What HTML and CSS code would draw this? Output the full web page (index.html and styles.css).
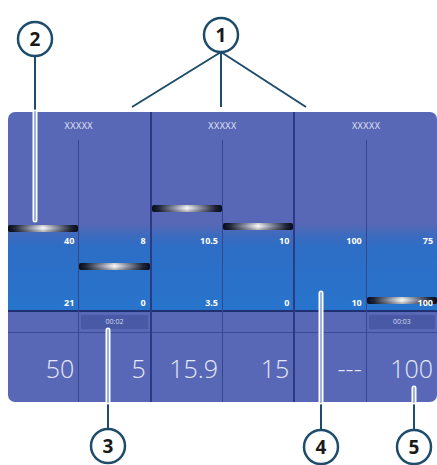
FILE: index.html
```html
<!DOCTYPE html>
<html lang="en">

<head>
    <meta charset="UTF-8">
    <meta name="viewport" content="width=device-width, initial-scale=1.0">
    <title>Level display</title>
    <link rel="stylesheet" href="styles.css">
</head>

<body>
    <div class="screen">
        <div class="panel">
            <div class="group">
                <div class="group-title">XXXXX</div>
                <div class="cols">
                    <div class="col">
                        <div class="bar">
                            <div class="handle" style="top: 85px"></div>
                            <span>40</span>
                            <span>21</span>
                        </div>
                        <div class="timer"></div>
                        <div class="value">50</div>
                    </div>
                    <div class="col">
                        <div class="bar">
                            <div class="handle" style="top: 123px"></div>
                            <span>8</span>
                            <span>0</span>
                        </div>
                        <div class="timer"><div class="timer-box">00:02</div></div>
                        <div class="value">5</div>
                    </div>
                </div>
            </div>
            <div class="group">
                <div class="group-title">XXXXX</div>
                <div class="cols">
                    <div class="col">
                        <div class="bar">
                            <div class="handle" style="top: 65px"></div>
                            <span>10.5</span>
                            <span>3.5</span>
                        </div>
                        <div class="timer"></div>
                        <div class="value">15.9</div>
                    </div>
                    <div class="col">
                        <div class="bar">
                            <div class="handle" style="top: 83px"></div>
                            <span>10</span>
                            <span>0</span>
                        </div>
                        <div class="timer"></div>
                        <div class="value">15</div>
                    </div>
                </div>
            </div>
            <div class="group">
                <div class="group-title">XXXXX</div>
                <div class="cols">
                    <div class="col">
                        <div class="bar">
                            <span>100</span>
                            <span>10</span>
                        </div>
                        <div class="timer"></div>
                        <div class="value">---</div>
                    </div>
                    <div class="col">
                        <div class="bar">
                            <div class="handle" style="top: 157px"></div>
                            <span>75</span>
                            <span>100</span>
                        </div>
                        <div class="timer"><div class="timer-box">00:03</div></div>
                        <div class="value">100</div>
                    </div>
                </div>
            </div>
        </div>

        <!-- callouts -->
        <svg class="callouts" width="437" height="465" viewBox="0 0 437 465">
            <g class="line">
                <line x1="221" y1="52" x2="221" y2="107" />
                <line x1="221" y1="52" x2="132" y2="107" />
                <line x1="221" y1="52" x2="306" y2="107" />
                <line x1="35" y1="56" x2="35" y2="112" />
                <line x1="108" y1="429" x2="108" y2="402" />
                <line x1="321" y1="430" x2="321" y2="402" />
                <line x1="414" y1="430" x2="414" y2="402" />
            </g>
            <g class="tube-out">
                <line x1="35" y1="112" x2="35" y2="220" />
                <line x1="108" y1="402" x2="108" y2="330" />
                <line x1="321" y1="402" x2="321" y2="293" />
                <line x1="414" y1="402" x2="414" y2="388" />
            </g>
            <g class="tube-in">
                <line x1="35" y1="112" x2="35" y2="220" />
                <line x1="108" y1="402" x2="108" y2="330" />
                <line x1="321" y1="402" x2="321" y2="293" />
                <line x1="414" y1="402" x2="414" y2="388" />
            </g>
            <g class="badge">
                <circle cx="221" cy="35" r="17" />
                <text x="221" y="42">1</text>
                <circle cx="35" cy="39" r="17" />
                <text x="35" y="46">2</text>
                <circle cx="108" cy="446" r="17" />
                <text x="108" y="453">3</text>
                <circle cx="321" cy="447" r="17" />
                <text x="321" y="454">4</text>
                <circle cx="414" cy="447" r="17" />
                <text x="414" y="454">5</text>
            </g>
        </svg>
    </div>
</body>

</html>
```

FILE: styles.css
```css
body {
    margin: 0;
    background-color: white;
    font-family: "Open Sans", "Noto Sans", sans-serif;
}

.screen {
    position: relative;
    width: 437px;
    height: 465px;
    padding: 112px 0 0 8px;
    box-sizing: border-box;
    overflow: hidden;
}

.panel {
    display: flex;
    width: 429px;
    height: 290px;
    background-color: #5868b6;
    border-radius: 7px;
    overflow: hidden;
}

.group {
    flex: 1;
    display: flex;
    flex-direction: column;
    border-right: 2px solid #2b3a82;
}

.group:last-child {
    border-right: none;
}

.group-title {
    height: 28px;
    line-height: 28px;
    text-align: center;
    font-size: 9px;
    letter-spacing: 0.5px;
    color: #e2e6f5;
}

.cols {
    flex: 1;
    display: flex;
}

.col {
    flex: 1;
    min-width: 0;
    display: flex;
    flex-direction: column;
}

.col + .col {
    border-left: 1px solid #34468f;
}

.bar {
    position: relative;
    height: 168px;
    display: flex;
    flex-direction: column;
    justify-content: flex-end;
    gap: 52px;
    padding: 0 4px 2px;
    background: linear-gradient(to bottom, #5868b6 0, #5868b6 84px, #3b6bbf 96px, #2d6ec6 108px, #2874cc 100%);
    font-size: 9px;
    font-weight: 700;
    line-height: 10px;
    color: white;
    text-align: right;
}

.bar span {
    position: relative;
}

.handle {
    position: absolute;
    left: 0;
    right: 0;
    height: 7px;
    border-radius: 2px;
    background:
        linear-gradient(to bottom, rgba(0, 0, 0, 0.2), rgba(255, 255, 255, 0) 45%, rgba(0, 0, 0, 0.3)),
        linear-gradient(90deg, #080c1c 0%, #22283d 10%, #9aa0b3 33%, #ffffff 50%, #9aa0b3 67%, #22283d 90%, #080c1c 100%);
}

.timer {
    height: 20px;
    border-top: 2px solid #1f3172;
    border-bottom: 1px solid #3b4b96;
    display: flex;
    align-items: center;
}

.timer-box {
    flex: 1;
    height: 14px;
    margin: 0 2px;
    background-color: #4a59a5;
    font-size: 7px;
    line-height: 14px;
    text-align: center;
    color: #d3daf0;
}

.value {
    flex: 1;
    display: flex;
    align-items: center;
    justify-content: flex-end;
    padding-right: 4px;
    font-size: 25px;
    font-weight: 300;
    color: #e4e9f7;
}

.callouts {
    position: absolute;
    top: 0;
    left: 0;
    pointer-events: none;
}

.line line {
    stroke: #1e4c6b;
    stroke-width: 2;
}

.tube-out line {
    stroke: white;
    stroke-width: 5;
    stroke-linecap: round;
}

.tube-in line {
    stroke: #9db4e0;
    stroke-width: 2;
    stroke-linecap: round;
}

.badge circle {
    fill: white;
    stroke: #1e4c6b;
    stroke-width: 2.5;
}

.badge text {
    font-family: "Open Sans", sans-serif;
    font-size: 19px;
    font-weight: 700;
    fill: #1a1a1a;
    text-anchor: middle;
}
```
